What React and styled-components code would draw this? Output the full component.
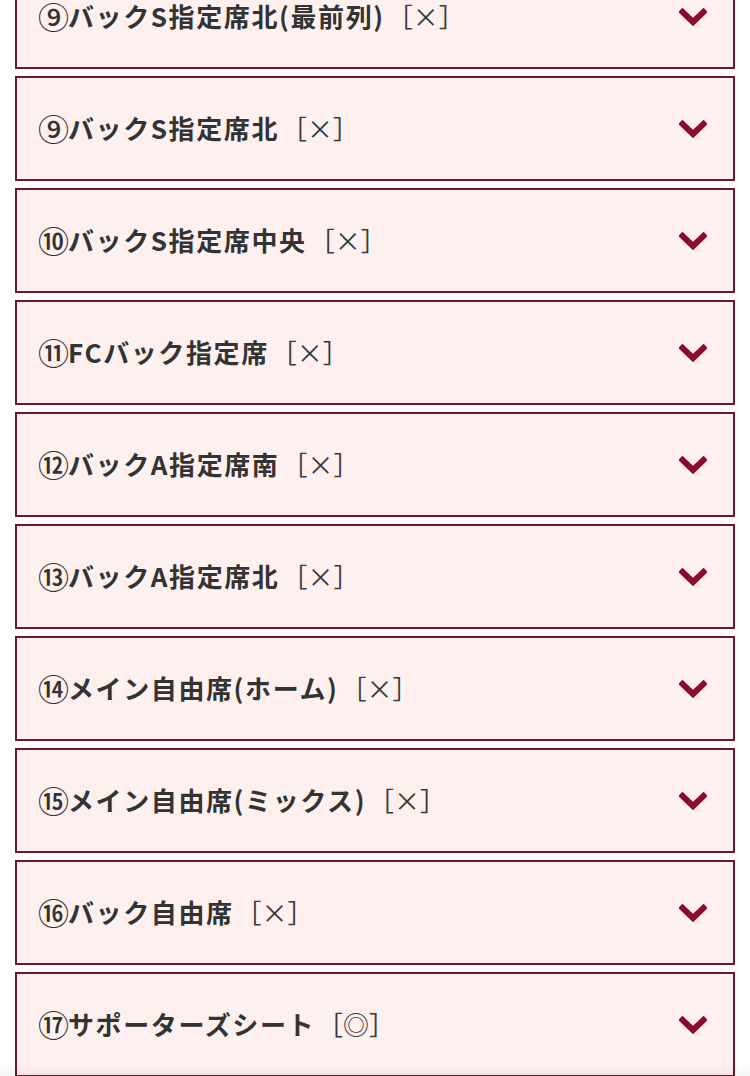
import React from "react";
import styled, { createGlobalStyle } from "styled-components";

const GlobalStyle = createGlobalStyle`
	html, body {
		margin: 0;
		padding: 0;
		background: #ffffff;
		overflow: hidden;
	}
	body {
		font-family: "Noto Sans CJK JP", "Noto Sans", sans-serif;
	}
`;

const Page = styled.div`
	width: 750px;
	height: 1076px;
	overflow: hidden;
	position: relative;
`;

const List = styled.div`
	display: flex;
	flex-direction: column;
	gap: 7px;
	padding: 0 15px;
	margin-top: -36px;
`;

const Item = styled.div`
	box-sizing: border-box;
	height: 105px;
	display: flex;
	align-items: center;
	justify-content: space-between;
	padding: 0 26px 0 21px;
	background: #fff0f0;
	border: 2px solid #6e1632;
`;

const Label = styled.span`
	display: flex;
	align-items: center;
	font-size: 26px;
	font-weight: 700;
	color: #333333;
	line-height: 30px;
	letter-spacing: 1.6px;
	margin-top: -2px;
`;

const Num = styled.span`
	display: inline-block;
	width: 30px;
	font-size: 31px;
	font-weight: 500;
	letter-spacing: 0;
`;

const Mark = styled.span`
	font-weight: 400;
	color: #3a3a3a;
	letter-spacing: 0;
	margin-left: 2px;
`;

const Chevron = styled.svg`
	width: 28px;
	height: 20px;
	flex-shrink: 0;
`;

const BottomShade = styled.div`
	position: absolute;
	left: 0;
	right: 0;
	bottom: 0;
	height: 12px;
	background: linear-gradient(180deg, rgba(0, 0, 0, 0) 0%, rgba(0, 0, 0, 0.05) 100%);
	pointer-events: none;
`;

const seats = [
	["⑨", "バックS指定席北(最前列)", "［×］"],
	["⑨", "バックS指定席北", "［×］"],
	["⑩", "バックS指定席中央", "［×］"],
	["⑪", "FCバック指定席", "［×］"],
	["⑫", "バックA指定席南", "［×］"],
	["⑬", "バックA指定席北", "［×］"],
	["⑭", "メイン自由席(ホーム)", "［×］"],
	["⑮", "メイン自由席(ミックス)", "［×］"],
	["⑯", "バック自由席", "［×］"],
	["⑰", "サポーターズシート", "［◎］"],
];

function ChevronDown() {
	return (
		<Chevron viewBox="0 0 28 20">
			<polyline
				points="3.5,5 14,15 24.5,5"
				fill="none"
				stroke="#8c0a2c"
				strokeWidth="6"
				strokeLinecap="square"
				strokeLinejoin="miter"
			/>
		</Chevron>
	);
}

export default function App() {
	return (
		<Page>
			<GlobalStyle />
			<List>
				{seats.map(([num, name, mark], i) => (
					<Item key={i}>
						<Label>
							<Num>{num}</Num>
							{name}
							<Mark>{mark}</Mark>
						</Label>
						<ChevronDown />
					</Item>
				))}
			</List>
			<BottomShade />
		</Page>
	);
}
